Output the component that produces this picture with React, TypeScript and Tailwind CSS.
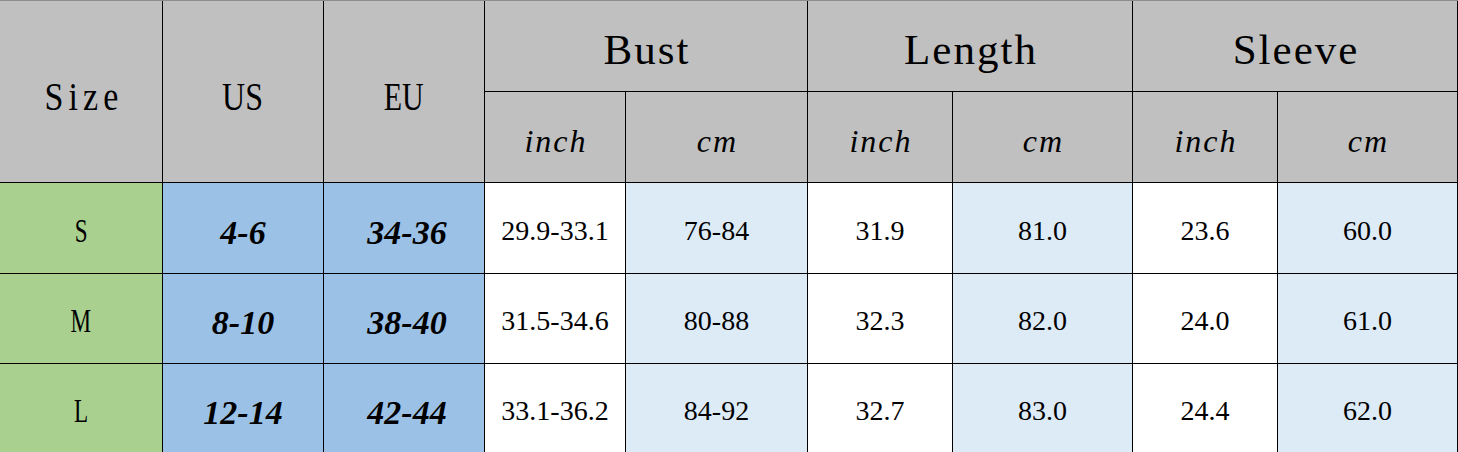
const serif = "font-['Liberation_Serif','Times_New_Roman',serif] text-black"

const rows = [
  { size: 'S', us: '4-6', eu: '34-36', bustIn: '29.9-33.1', bustCm: '76-84', lenIn: '31.9', lenCm: '81.0', slvIn: '23.6', slvCm: '60.0' },
  { size: 'M', us: '8-10', eu: '38-40', bustIn: '31.5-34.6', bustCm: '80-88', lenIn: '32.3', lenCm: '82.0', slvIn: '24.0', slvCm: '61.0' },
  { size: 'L', us: '12-14', eu: '42-44', bustIn: '33.1-36.2', bustCm: '84-92', lenIn: '32.7', lenCm: '83.0', slvIn: '24.4', slvCm: '62.0' },
]

function Cell({ className, children }: { className: string; children: React.ReactNode }) {
  return <div className={`flex items-center justify-center ${className}`}>{children}</div>
}

function Group({ label }: { label: string }) {
  return (
    <Cell className="col-span-2 bg-[#c0c0c0] pt-2">
      <span className="pl-[2px] text-[43px] tracking-[2px]">{label}</span>
    </Cell>
  )
}

function Unit({ label }: { label: string }) {
  return (
    <Cell className="bg-[#c0c0c0] pt-[7px]">
      <span className="pl-[2px] text-[32px] italic tracking-[2px]">{label}</span>
    </Cell>
  )
}

function Value({ value, light }: { value: string; light?: boolean }) {
  return (
    <Cell className={`pt-[5px] ${light ? 'bg-[#ddebf7]' : 'bg-white'}`}>
      <span className="text-[28px]">{value}</span>
    </Cell>
  )
}

export default function App() {
  return (
    <div className="w-[1458px] h-[452px] overflow-hidden bg-white">
      <div
        className={`grid grid-cols-[162px_160px_160px_140px_181px_144px_179px_144px_179px] grid-rows-[90px_90px_90px_89px_88px] gap-px border-t border-[#8c8c8c] bg-black pr-px ${serif}`}
      >
        <Cell className="row-span-2 bg-[#c0c0c0] pt-[10px]">
          <span className="inline-block scale-x-[0.85] pl-[6px] text-[40px] tracking-[6px]">Size</span>
        </Cell>
        <Cell className="row-span-2 bg-[#c0c0c0] pt-[10px]">
          <span className="inline-block scale-x-[0.8] text-[40px]">US</span>
        </Cell>
        <Cell className="row-span-2 bg-[#c0c0c0] pt-[10px]">
          <span className="inline-block scale-x-[0.75] text-[40px]">EU</span>
        </Cell>
        <Group label="Bust" />
        <Group label="Length" />
        <Group label="Sleeve" />

        <Unit label="inch" />
        <Unit label="cm" />
        <Unit label="inch" />
        <Unit label="cm" />
        <Unit label="inch" />
        <Unit label="cm" />

        {rows.map((r) => (
          <div key={r.size} className="contents">
            <Cell className="bg-[#a9d08e] pt-[7px]">
              <span className="inline-block scale-x-[0.7] text-[33px]">{r.size}</span>
            </Cell>
            <Cell className="bg-[#9bc2e6] pt-2">
              <span className="text-[34px] font-bold italic">{r.us}</span>
            </Cell>
            <Cell className="bg-[#9bc2e6] pt-2">
              <span className="pl-[6px] text-[34px] font-bold italic">{r.eu}</span>
            </Cell>
            <Value value={r.bustIn} />
            <Value value={r.bustCm} light />
            <Value value={r.lenIn} />
            <Value value={r.lenCm} light />
            <Value value={r.slvIn} />
            <Value value={r.slvCm} light />
          </div>
        ))}
      </div>
    </div>
  )
}
